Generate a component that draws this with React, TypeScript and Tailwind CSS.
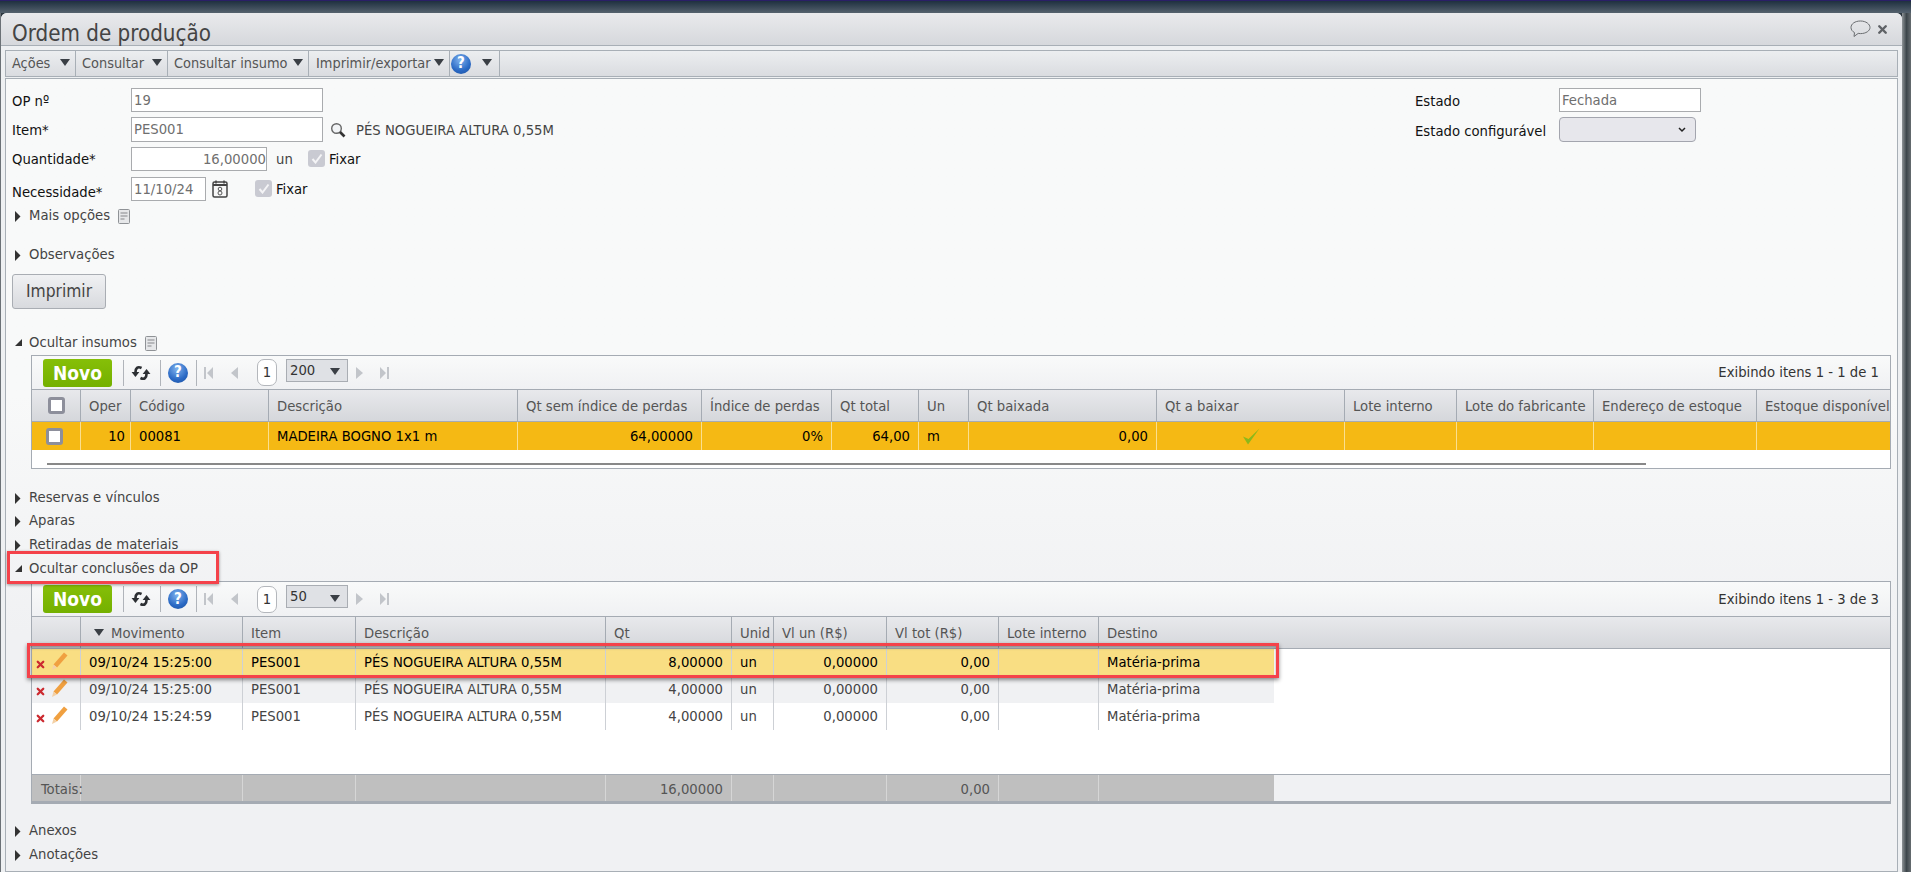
import React from "react";
import { X } from "lucide-react";

function Caret({ className = "" }: { className?: string }) {
  return (
    <svg width="10" height="7" viewBox="0 0 10 7" className={`shrink-0 ${className}`}>
      <path d="M0 0h10L5 7z" fill="#3a3f45" />
    </svg>
  );
}

function HelpIcon() {
  return (
    <span className="flex h-[20px] w-[20px] shrink-0 items-center justify-center rounded-full bg-[radial-gradient(circle_at_45%_30%,#7fb2ee,#2a69c4_60%,#1b4f9c)] text-[15px] font-bold leading-none text-white">
      ?
    </span>
  );
}

function DocIcon() {
  return (
    <svg width="12" height="15" viewBox="0 0 12 15" className="shrink-0">
      <rect x="0.5" y="0.5" width="11" height="14" rx="1" fill="#e6e7e9" stroke="#8f9296" />
      <path d="M2.500 4h7M2.500 7h7M2.500 10h4" stroke="#85888c" strokeWidth="1.2" />
    </svg>
  );
}

function Section({ open = false, label, doc = false, className = "" }: { open?: boolean; label: string; doc?: boolean; className?: string }) {
  return (
    <div className={`relative flex h-[20px] items-center text-[14.7px] text-[#444] ${className}`}>
      <span className="ml-[9px] flex w-[14px] shrink-0 items-center">
        {open ? (
          <svg width="8" height="8" viewBox="0 0 8 8"><path d="M0 7h7V0z" fill="#333" /></svg>
        ) : (
          <svg width="6" height="11" viewBox="0 0 6 11"><path d="M0 0l5.500 5.500L0 11z" fill="#333" /></svg>
        )}
      </span>
      <span className="pb-[2px]">{label}</span>
      {doc && <span className="ml-[8px] flex"><DocIcon /></span>}
    </div>
  );
}

function Field({ value, className = "" }: { value: string; className?: string }) {
  return (
    <div className={`flex items-center border border-[#a9abae] bg-white px-[2px] text-[14.7px] text-[#6f6f6f] ${className}`}>
      {value}
    </div>
  );
}

function FixCheck({ className = "" }: { className?: string }) {
  return (
    <span className={`flex items-center text-[14.7px] text-[#111] ${className}`}>
      <span className="mr-[4px] flex h-[17px] w-[17px] items-center justify-center rounded-[3px] bg-[#c9cad2]">
        <svg width="12" height="11" viewBox="0 0 12 11"><path d="M1.500 6l3 3.500L10.500 1.500" fill="none" stroke="#f4f4f6" strokeWidth="2" /></svg>
      </span>
      Fixar
    </span>
  );
}

function GridBox({ className = "" }: { className?: string }) {
  return <span className={`block h-[17px] w-[17px] rounded-[3px] border-[3px] border-[#8d8f9b] bg-white ${className}`} />;
}

function GridToolbar({ pageSize, info, className = "h-[34px]" }: { pageSize: string; info: string; className?: string }) {
  return (
    <div className={`flex items-center border-b border-[#a5abb3] bg-gradient-to-b from-[#f9fafa] to-[#f0f1f3] text-[14.7px] ${className}`}>
      <button className="ml-[11px] h-[28px] w-[69px] rounded-[3px] bg-gradient-to-b from-[#86bf08] to-[#74b000] text-[19px] font-bold text-white">Novo</button>
      <span className="ml-[11px] h-[26px] w-px bg-[#b0b4ba]" />
      <svg width="20" height="18" viewBox="0 0 18 16" className="ml-[7px]">
        <path d="M9.500 3.500C6 1.800 4 3.500 4 7.500" fill="none" stroke="#2c2f33" strokeWidth="2.400" />
        <path d="M0.500 7h7L4 11.500z" fill="#2c2f33" />
        <path d="M8.500 12.500C12 14.200 14 12.500 14 8.500" fill="none" stroke="#2c2f33" strokeWidth="2.400" />
        <path d="M10.500 9h7L14 4.500z" fill="#2c2f33" />
      </svg>
      <span className="ml-[9px] h-[26px] w-px bg-[#b0b4ba]" />
      <span className="ml-[7px]"><HelpIcon /></span>
      <span className="ml-[8px] h-[26px] w-px bg-[#b0b4ba]" />
      <svg width="9" height="12" viewBox="0 0 9 12" className="ml-[7px]"><path d="M0 0h2v12H0zM9 0v12L3 6z" fill="#c2c5ca" /></svg>
      <svg width="7" height="12" viewBox="0 0 7 12" className="ml-[18px]"><path d="M7 0v12L0 6z" fill="#c2c5ca" /></svg>
      <span className="ml-[19px] flex h-[27px] w-[20px] items-center justify-center rounded-[7px] border border-[#b4b7bc] bg-white text-[#333]">1</span>
      <span className="mb-[5px] ml-[9px] flex h-[23px] w-[62px] items-center justify-between border border-[#a9adb3] bg-[#dfe1e5] pl-[3px] pr-[7px] text-[#333]">
        {pageSize}
        <Caret className="mt-[3px]" />
      </span>
      <svg width="7" height="12" viewBox="0 0 7 12" className="ml-[8px]"><path d="M0 0v12l7-6z" fill="#c2c5ca" /></svg>
      <svg width="9" height="12" viewBox="0 0 9 12" className="ml-[17px]"><path d="M0 0v12l6-6zM7 0h2v12H7z" fill="#c2c5ca" /></svg>
      <span className="ml-auto mr-[11px] text-[#333]">{info}</span>
    </div>
  );
}

const insumosHead = ["Oper", "Código", "Descrição", "Qt sem índice de perdas", "Índice de perdas", "Qt total", "Un", "Qt baixada", "Qt a baixar", "Lote interno", "Lote do fabricante", "Endereço de estoque", "Estoque disponível"];
const insumosRow: [string, string][] = [
  ["10", "r"], ["00081", "l"], ["MADEIRA BOGNO 1x1 m", "l"], ["64,00000", "r"], ["0%", "r"], ["64,00", "r"], ["m", "l"], ["0,00", "r"], ["", "c"], ["", "l"], ["", "l"], ["", "l"], ["", "l"],
];

const conclHead = ["Item", "Descrição", "Qt", "Unid", "Vl un (R$)", "Vl tot (R$)", "Lote interno", "Destino"];
const conclRows = [
  { date: "09/10/24 15:25:00", qt: "8,00000", bg: "bg-[#f9de83]", text: "text-black" },
  { date: "09/10/24 15:25:00", qt: "4,00000", bg: "bg-[#f0f1f3]", text: "text-[#444]" },
  { date: "09/10/24 15:24:59", qt: "4,00000", bg: "bg-white", text: "text-[#444]" },
];

function RowIcons() {
  return (
    <div className="flex h-full items-center border-r border-[#cdd0d5] pl-[3px]">
      <X size={11} strokeWidth={5} className="mt-[3px] text-[#cc2a30]" />
      <svg width="20" height="20" viewBox="0 0 18 20" className="mb-[3px] ml-[4px]">
        <path d="M13 1.500l3.500 3L6 16.500l-3.500-3z" fill="#f0a040" />
        <path d="M2.500 13.500l3.500 3-5 2.500z" fill="#f3d0a5" />
      </svg>
    </div>
  );
}

export default function App() {
  return (
    <div className="flex h-[872px] w-full flex-col overflow-hidden bg-[#2c3740] font-['DejaVu_Sans_Condensed','DejaVu_Sans',sans-serif]">
      <div className="h-[13px] shrink-0 border-t border-[#2a1f66] bg-gradient-to-b from-[#1f3040] to-[#55626e]" />
      <div className="flex min-h-0 flex-1">
        <div className="w-px shrink-0 bg-[#6b7176]" />
        <div className="flex w-[1901px] shrink-0 flex-col rounded-t-[6px] bg-[#eef0f2]">
          <div className="flex h-[33px] shrink-0 items-center justify-between rounded-t-[6px] border-b border-[#a8afb6] bg-gradient-to-b from-[#e9eaec] to-[#d6d8dc] pl-[11px] pr-[13px] pt-[8px]">
            <span className="text-[22.2px] leading-none text-[#444]">Ordem de produção</span>
            <span className="mb-[8px] flex items-center gap-[5px]">
              <svg width="21" height="18" viewBox="0 0 21 18">
                <path d="M10.500 1C5 1 1 3.800 1 7.500c0 2.200 1.400 4 3.500 5.100L4 16.500l4.200-3.100c.7.100 1.500.2 2.300.2 5.500 0 9.500-2.800 9.500-6.100S16 1 10.500 1z" fill="none" stroke="#6a6d70" strokeWidth="1" />
              </svg>
              <X size={13} strokeWidth={4.5} className="text-[#5f6266]" />
            </span>
          </div>

          <div className="mx-[4px] mt-[4px] flex h-[27px] shrink-0 border border-[#a8afb6] bg-gradient-to-b from-[#eceef0] to-[#dadce0] text-[14.4px] text-[#555]">
            <div className="flex w-[70px] items-center justify-between border-r border-[#a8afb6] pl-[6px] pr-[5px]">Ações<Caret className="mb-[3px]" /></div>
            <div className="flex w-[92px] items-center justify-between border-r border-[#a8afb6] pl-[6px] pr-[5px]">Consultar<Caret className="mb-[3px]" /></div>
            <div className="flex w-[141px] items-center justify-between border-r border-[#a8afb6] pl-[6px] pr-[5px]">Consultar insumo<Caret className="mb-[3px]" /></div>
            <div className="flex w-[141px] items-center justify-between border-r border-[#a8afb6] pl-[7px] pr-[5px]">Imprimir/exportar<Caret className="mb-[3px]" /></div>
            <div className="flex w-[50px] items-center justify-between border-r border-[#a8afb6] pl-[1px] pr-[7px]"><HelpIcon /><Caret className="mb-[3px]" /></div>
          </div>

          <div className="mx-[4px] mt-[1px] min-h-0 flex-1 border border-[#a8afb6] bg-gradient-to-b from-[#f8f9f9] from-40% to-[#f0f1f3] to-70%">
            <div className="flex justify-between pt-[9px]">
              <div className="pl-[6px] text-[14.7px] text-[#111]">
                <div className="flex h-[24px] items-center">
                  <span className="mt-[2px] w-[119px]">OP nº</span>
                  <Field value="19" className="h-[24px] w-[192px]" />
                </div>
                <div className="mt-[5px] flex h-[25px] items-center">
                  <span className="mt-[1px] w-[119px]">Item*</span>
                  <Field value="PES001" className="h-[25px] w-[192px]" />
                  <svg width="16" height="16" viewBox="0 0 16 16" className="ml-[7px]">
                    <circle cx="6.500" cy="6.500" r="4.800" fill="#f2f4f6" stroke="#666" strokeWidth="1.400" />
                    <path d="M10 10l4.500 4.500" stroke="#333" strokeWidth="2.600" />
                  </svg>
                  <span className="ml-[10px] mt-[2px] text-[#444]">PÉS NOGUEIRA ALTURA 0,55M</span>
                </div>
                <div className="mt-[5px] flex h-[24px] items-center">
                  <span className="w-[119px]">Quantidade*</span>
                  <Field value="16,00000" className="h-[24px] w-[136px] justify-end !px-0" />
                  <span className="w-[41px] pl-[9px] text-[#444]">un</span>
                  <FixCheck />
                </div>
                <div className="mt-[6px] flex h-[24px] items-center">
                  <span className="mt-[6px] w-[119px]">Necessidade*</span>
                  <Field value="11/10/24" className="h-[24px] w-[75px]" />
                  <svg width="16" height="18" viewBox="0 0 16 18" className="ml-[6px]">
                    <rect x="1" y="2" width="14" height="15" rx="1.500" fill="#f7f7f7" stroke="#444" strokeWidth="1.500" />
                    <path d="M1 5h14" stroke="#444" strokeWidth="2" />
                    <path d="M4 0.500v3M12 0.500v3" stroke="#444" strokeWidth="1.500" />
                    <circle cx="8" cy="9" r="1.800" fill="none" stroke="#555" />
                    <circle cx="8" cy="13" r="2" fill="none" stroke="#555" />
                  </svg>
                  <FixCheck className="ml-[27px]" />
                </div>
              </div>
              <div className="mr-[196px] text-[14.7px] text-[#111]">
                <div className="flex h-[24px] items-center">
                  <span className="mt-[2px] w-[144px]">Estado</span>
                  <Field value="Fechada" className="h-[24px] w-[142px]" />
                </div>
                <div className="mt-[5px] flex h-[25px] items-center">
                  <span className="mt-[4px] w-[144px] whitespace-nowrap">Estado configurável</span>
                  <div className="flex h-[25px] w-[137px] items-center justify-end rounded-[4px] border border-[#a3a5ae] bg-[#e7e7ec] pr-[9px]">
                    <svg width="8" height="6" viewBox="0 0 8 6"><path d="M1 1l3 3 3-3" fill="none" stroke="#222" strokeWidth="1.500" /></svg>
                  </div>
                </div>
              </div>
            </div>

            <Section label="Mais opções" doc className="mt-[5px]" />
            <Section label="Observações" className="mt-[19px]" />
            <button className="ml-[6px] mt-[9px] block h-[35px] w-[94px] rounded-[3px] border border-[#a9adb3] bg-gradient-to-b from-[#f0f1f3] to-[#d8dade] text-[17.3px] text-[#444]">Imprimir</button>

            <Section open label="Ocultar insumos" doc className="mt-[24px]" />
            <div className="ml-[25px] mt-[2px] w-[1860px] border border-[#a5abb3] bg-white text-[14.7px]">
              <GridToolbar pageSize="200" info="Exibindo itens 1 - 1 de 1" />
              <div className="grid h-[32px] grid-cols-[49px_50px_138px_249px_184px_130px_87px_50px_188px_188px_112px_137px_163px_1fr] border-b border-[#a5abb3] bg-gradient-to-b from-[#e8e9ec] to-[#d5d7db] text-[#555]">
                <div className="flex items-center justify-center border-r border-[#a5abb3] pl-px"><GridBox /></div>
                {insumosHead.map((h, i) => (
                  <div key={h} className={`flex items-center whitespace-nowrap pl-[8px] pt-[2px] ${i < 12 ? "border-r border-[#a5abb3]" : ""}`}>{h}</div>
                ))}
              </div>
              <div className="grid h-[28px] grid-cols-[49px_50px_138px_249px_184px_130px_87px_50px_188px_188px_112px_137px_163px_1fr] bg-[#f5b914] text-black">
                <div className="flex items-center border-r border-[#fadf8f] pl-[14px]"><GridBox /></div>
                {insumosRow.map(([v, align], i) => (
                  <div key={i} className={`flex items-center ${i === 0 ? "pl-[8px] pr-[5px]" : "px-[8px]"} ${align === "r" ? "justify-end" : align === "c" ? "justify-center" : ""} ${i < 12 ? "border-r border-[#fadf8f]" : ""}`}>
                    {align === "c" ? (
                      <svg width="18" height="17" viewBox="0 0 18 17"><path d="M1 8.500l5 8L17.500 0.500 6.500 11z" fill="#8cb81a" /></svg>
                    ) : v}
                  </div>
                ))}
              </div>
              <div className="h-[18px] pl-[15px] pt-[13px]">
                <div className="h-[2px] w-[1599px] bg-[#888]" />
              </div>
            </div>

            <Section label="Reservas e vínculos" className="mt-[19px]" />
            <Section label="Aparas" className="mt-[3px]" />
            <Section label="Retiradas de materiais" className="mt-[4px]" />
            <Section open label="Ocultar conclusões da OP" className="mt-[4px]" />
            <div className="relative ml-[25px] mt-[2px] w-[1860px] border border-[#a5abb3] bg-white text-[14.7px]">
              <GridToolbar pageSize="50" info="Exibindo itens 1 - 3 de 3" className="h-[35px]" />
              <div className="grid h-[32px] grid-cols-[49px_162px_113px_250px_126px_42px_113px_112px_100px_1fr] border-b border-[#a5abb3] bg-gradient-to-b from-[#e8e9ec] to-[#d5d7db] text-[#555]">
                <div className="border-r border-[#a5abb3]" />
                <div className="flex items-center border-r border-[#a5abb3] pl-[13px] pt-[2px]"><Caret className="mb-[3px] mr-[7px]" />Movimento</div>
                {conclHead.map((h, i) => (
                  <div key={h} className={`flex items-center whitespace-nowrap pl-[8px] pt-[2px] ${i < 7 ? "border-r border-[#a5abb3]" : ""}`}>{h}</div>
                ))}
              </div>
              <div className="h-[125px]">
                {conclRows.map((r, i) => (
                  <div key={i} className={`grid h-[27px] w-[1242px] grid-cols-[49px_162px_113px_250px_126px_42px_113px_112px_100px_175px] ${r.bg} ${r.text}`}>
                    <RowIcons />
                    <div className="flex items-center border-r border-[#cdd0d5] pl-[8px]">{r.date}</div>
                    <div className="flex items-center border-r border-[#cdd0d5] pl-[8px]">PES001</div>
                    <div className="flex items-center border-r border-[#cdd0d5] pl-[8px]">PÉS NOGUEIRA ALTURA 0,55M</div>
                    <div className="flex items-center justify-end border-r border-[#cdd0d5] pr-[8px]">{r.qt}</div>
                    <div className="flex items-center border-r border-[#cdd0d5] pl-[8px]">un</div>
                    <div className="flex items-center justify-end border-r border-[#cdd0d5] pr-[8px]">0,00000</div>
                    <div className="flex items-center justify-end border-r border-[#cdd0d5] pr-[8px]">0,00</div>
                    <div className="border-r border-[#cdd0d5]" />
                    <div className="flex items-center pl-[8px]">Matéria-prima</div>
                  </div>
                ))}
              </div>
              <div className="flex h-[29px] border-b-[2px] border-t border-[#a5abb3] bg-[#f0f1f3]">
                <div className="grid w-[1242px] grid-cols-[49px_162px_113px_250px_126px_42px_113px_112px_100px_175px] bg-[#bfbfbf] text-[#555]">
                  <div className="flex items-center whitespace-nowrap border-r border-[#d6d6d6] pl-[9px] pt-[2px]">Totais:</div>
                  <div className="border-r border-[#d6d6d6]" />
                  <div className="border-r border-[#d6d6d6]" />
                  <div className="border-r border-[#d6d6d6]" />
                  <div className="flex items-center justify-end border-r border-[#d6d6d6] pr-[8px] pt-[2px]">16,00000</div>
                  <div className="border-r border-[#d6d6d6]" />
                  <div className="border-r border-[#d6d6d6]" />
                  <div className="flex items-center justify-end border-r border-[#d6d6d6] pr-[8px] pt-[2px]">0,00</div>
                  <div className="border-r border-[#d6d6d6]" />
                  <div />
                </div>
              </div>
              {/* destaque vermelho da linha */}
              <div className="absolute left-[-5px] top-[61px] h-[35px] w-[1252px] border-[3px] border-[#f4424a] shadow-[0_2px_4px_rgba(0,0,0,0.45),inset_0_2px_3px_rgba(0,0,0,0.35)]" />
              <div className="absolute left-[-25px] top-[-31px] h-[33px] w-[212px] border-[3px] border-[#f4424a] shadow-[0_1px_3px_rgba(0,0,0,0.4)]" />
            </div>

            <Section label="Anexos" className="mt-[17px]" />
            <Section label="Anotações" className="mt-[4px]" />
          </div>
        </div>
        <div className="flex-1 bg-gradient-to-r from-[#8f9497] via-[#3d464b] to-[#666c70]" />
      </div>
    </div>
  );
}
